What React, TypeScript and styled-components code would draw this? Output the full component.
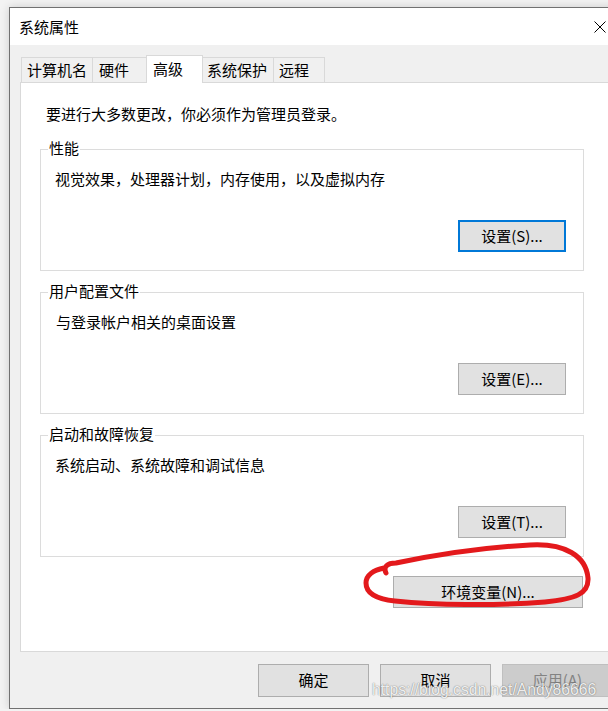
import React from "react";
import styled, { createGlobalStyle } from "styled-components";

const GlobalStyle = createGlobalStyle`
  html, body {
    margin: 0;
    padding: 0;
    overflow: hidden;
    background: #f3f3f3;
    font-family: "Noto Sans CJK SC", "Microsoft YaHei", sans-serif;
    color: #000;
  }
`;

const Window = styled.div`
  box-sizing: border-box;
  width: 615px;
  height: 702px;
  margin: 7px 0 0 9px;
  border: 1px solid #717171;
  background: #f0f0f0;
  box-shadow: 0 0 9px rgba(0, 0, 0, 0.16);
  display: flex;
  flex-direction: column;
`;

const TitleBar = styled.div`
  height: 37px;
  background: #fff;
  display: flex;
  align-items: center;
  justify-content: space-between;
  flex-shrink: 0;
`;

const Title = styled.span`
  padding-left: 9px;
  font-size: 15px;
  line-height: 20px;
`;

const CloseButton = styled.div`
  width: 46px;
  height: 37px;
  display: flex;
  align-items: center;
  justify-content: center;
`;

const Body = styled.div`
  flex: 1;
  padding: 10px 10px 0 10px;
  display: flex;
  flex-direction: column;
`;

const TabList = styled.div`
  display: flex;
  align-items: flex-start;
  height: 27px;
  padding-left: 1px;
`;

const Tab = styled.div<{ $w: number; $pl: number; $active?: boolean }>`
  box-sizing: border-box;
  width: ${(p) => p.$w}px;
  padding-left: ${(p) => p.$pl}px;
  height: ${(p) => (p.$active ? 28 : 25)}px;
  margin-top: ${(p) => (p.$active ? 0 : 2)}px;
  margin-left: -1px;
  &:first-child {
    margin-left: 0;
  }
  border: 1px solid #d9d9d9;
  border-bottom: none;
  background: ${(p) => (p.$active ? "#fff" : "#f0f0f0")};
  position: relative;
  z-index: ${(p) => (p.$active ? 2 : 1)};
  font-size: 15px;
  line-height: ${(p) => (p.$active ? 25 : 23)}px;
  white-space: nowrap;
`;

const Panel = styled.div`
  box-sizing: border-box;
  height: 570px;
  background: #fff;
  border: 1px solid #d9d9d9;
  padding: 21px 0 0 19px;
  flex-shrink: 0;
`;

const Note = styled.div`
  margin-left: 6px;
  font-size: 15px;
  line-height: 20px;
`;

const Group = styled.div<{ $mt: number }>`
  position: relative;
  box-sizing: border-box;
  width: 544px;
  height: 122px;
  margin-top: ${(p) => p.$mt}px;
  border: 1px solid #dcdcdc;
  padding: 19px 17px 17px 14px;
`;

const GroupLabel = styled.span`
  position: absolute;
  top: -12px;
  left: 7px;
  padding: 0 1px;
  background: #fff;
  font-size: 15px;
  line-height: 20px;
`;

const Desc = styled.div<{ $ml?: number }>`
  margin-left: ${(p) => p.$ml ?? 0}px;
  font-size: 15px;
  line-height: 20px;
`;

const ButtonRow = styled.div<{ $mt: number }>`
  display: flex;
  justify-content: flex-end;
  margin-top: ${(p) => p.$mt}px;
`;

const EnvRow = styled.div`
  width: 543px;
  display: flex;
  justify-content: flex-end;
  margin-top: 19px;
`;

const Button = styled.div<{ $w: number; $h?: number; $focus?: boolean; $disabled?: boolean }>`
  box-sizing: border-box;
  width: ${(p) => p.$w}px;
  height: ${(p) => p.$h ?? 32}px;
  background: ${(p) => (p.$disabled ? "#cccccc" : "#e1e1e1")};
  border: ${(p) =>
    p.$focus ? "2px solid #0078d7" : p.$disabled ? "1px solid #bfbfbf" : "1px solid #adadad"};
  color: ${(p) => (p.$disabled ? "#838383" : "#000")};
  display: flex;
  align-items: center;
  justify-content: center;
  padding-bottom: 1px;
  font-size: 15px;
  line-height: 20px;
  white-space: nowrap;
`;

const Footer = styled.div`
  display: flex;
  gap: 11px;
  margin-top: 12px;
  padding-left: 238px;
`;

const Watermark = styled.div`
  position: absolute;
  left: 372px;
  top: 681px;
  font-family: "Liberation Sans", Arial, sans-serif;
  font-size: 15.7px;
  line-height: 18px;
  color: rgba(255, 255, 255, 0.9);
  text-shadow: 0 0 1px rgba(0, 0, 0, 0.45), 0 0 2px rgba(0, 0, 0, 0.2);
  white-space: nowrap;
  pointer-events: none;
`;

const Annotation = styled.svg`
  position: absolute;
  left: 0;
  top: 0;
  pointer-events: none;
`;

const tabs = [
  { label: "计算机名", w: 72, pl: 5 },
  { label: "硬件", w: 55, pl: 6 },
  { label: "高级", w: 57, pl: 6, active: true },
  { label: "系统保护", w: 72, pl: 4 },
  { label: "远程", w: 52, pl: 5 },
];

export default function App() {
  return (
    <>
      <GlobalStyle />
      <Window>
        <TitleBar>
          <Title>系统属性</Title>
          <CloseButton>
            <svg width="12" height="12" viewBox="0 0 12 12">
              <path d="M0.5 0.5 L11.5 11.5 M11.5 0.5 L0.5 11.5" stroke="#000" strokeWidth="1" />
            </svg>
          </CloseButton>
        </TitleBar>
        <Body>
          <TabList>
            {tabs.map((t) => (
              <Tab key={t.label} $w={t.w} $pl={t.pl} $active={t.active}>
                {t.label}
              </Tab>
            ))}
          </TabList>
          <Panel>
            <Note>要进行大多数更改，你必须作为管理员登录。</Note>
            <Group $mt={25}>
              <GroupLabel>性能</GroupLabel>
              <Desc>视觉效果，处理器计划，内存使用，以及虚拟内存</Desc>
              <ButtonRow $mt={31}>
                <Button $w={108} $focus>设置(S)...</Button>
              </ButtonRow>
            </Group>
            <Group $mt={21}>
              <GroupLabel>用户配置文件</GroupLabel>
              <Desc $ml={1}>与登录帐户相关的桌面设置</Desc>
              <ButtonRow $mt={31}>
                <Button $w={108}>设置(E)...</Button>
              </ButtonRow>
            </Group>
            <Group $mt={21}>
              <GroupLabel>启动和故障恢复</GroupLabel>
              <Desc>系统启动、系统故障和调试信息</Desc>
              <ButtonRow $mt={31}>
                <Button $w={108}>设置(T)...</Button>
              </ButtonRow>
            </Group>
            <EnvRow>
              <Button $w={190}>环境变量(N)...</Button>
            </EnvRow>
          </Panel>
          <Footer>
            <Button $w={111} $h={33}>确定</Button>
            <Button $w={111} $h={33}>取消</Button>
            <Button $w={111} $h={33} $disabled>应用(A)</Button>
          </Footer>
        </Body>
      </Window>
      <Annotation width="608" height="711" viewBox="0 0 608 711">
        <path
          d="M386 573 C383 567 387 563 396 563 C420 558 470 548 530 545 C565 543 586 556 588 578 C589 594 575 599 545 602 C495 606 435 605 395 601 C376 599 366 593 366 583 C366 575 374 570 384 568"
          fill="none"
          stroke="#e3191c"
          strokeWidth="5"
          strokeLinecap="round"
          strokeLinejoin="round"
        />
      </Annotation>
      <Watermark>https://blog.csdn.net/Andy86666</Watermark>
    </>
  );
}
